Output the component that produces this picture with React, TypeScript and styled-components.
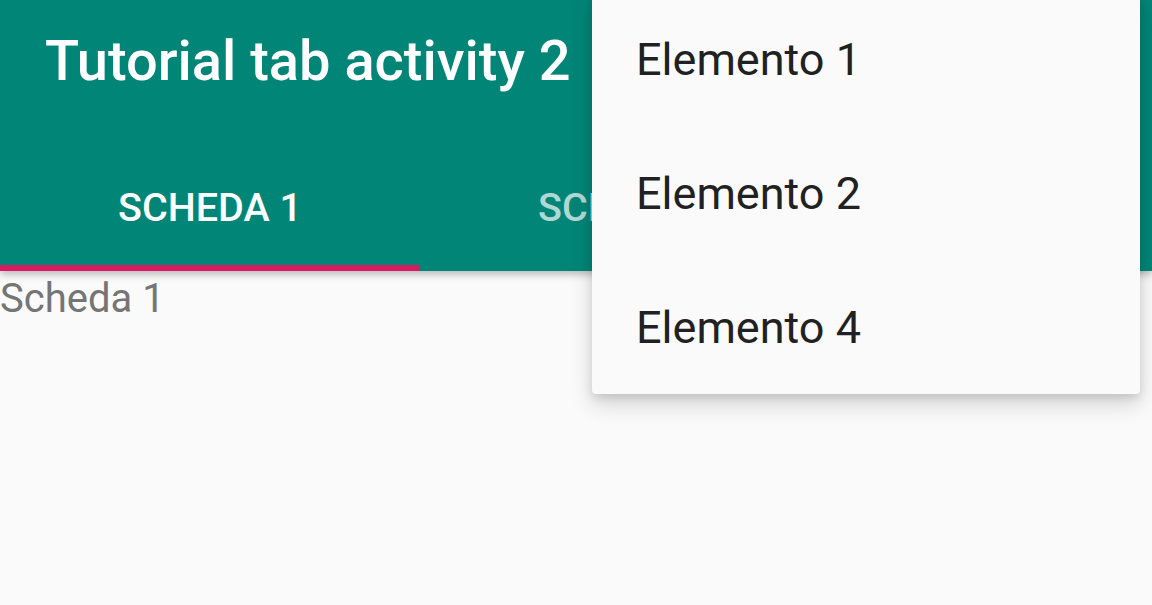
import styled, { createGlobalStyle } from 'styled-components'

const GlobalStyle = createGlobalStyle`
  html, body {
    margin: 0;
    padding: 0;
    background: #fafafa;
    font-family: Roboto, "Liberation Sans", sans-serif;
  }
`

const TEAL = '#008577'
const ACCENT = '#d81b60'

interface ITab {
  label: string
  active?: boolean
}

function Tab({ label, active }: ITab) {
  return (
    <TabItem $active={active}>
      <span>{label}</span>
    </TabItem>
  )
}

const menuItems = ['Elemento 1', 'Elemento 2', 'Elemento 4']

function App() {
  return (
    <>
      <GlobalStyle />
      <Screen>
        <AppBar>
          <Toolbar>
            <Title>Tutorial tab activity 2</Title>
          </Toolbar>
          <Tabs>
            <Tab label="SCHEDA 1" active />
            <Tab label="SCHEDA 2" />
          </Tabs>
        </AppBar>
        <Content>Scheda 1</Content>
        <Menu>
          {menuItems.map((item) => (
            <MenuItem key={item}>{item}</MenuItem>
          ))}
        </Menu>
      </Screen>
    </>
  )
}

const Screen = styled.div`
  position: relative;
  width: 1152px;
  height: 605px;
  overflow: hidden;
  background: #fafafa;
`

const AppBar = styled.header`
  display: flex;
  flex-direction: column;
  height: 271px;
  background: ${TEAL};
  box-shadow: 0 3px 8px rgba(0, 0, 0, 0.28);
  position: relative;
  z-index: 1;
`

const Toolbar = styled.div`
  height: 122px;
  display: flex;
  align-items: center;
  padding-left: 45px;
`

const Title = styled.h1`
  margin: 0;
  font-size: 56px;
  font-weight: 500;
  color: #ffffff;
  line-height: 1;
`

const Tabs = styled.nav`
  flex: 1;
  display: flex;
`

const TabItem = styled.div<{ $active?: boolean }>`
  width: 420px;
  flex-shrink: 0;
  display: flex;
  align-items: center;
  justify-content: center;
  box-sizing: border-box;
  padding-top: 28px;
  border-bottom: 6px solid ${(p) => (p.$active ? ACCENT : 'transparent')};
  font-size: 39.5px;
  font-weight: 500;
  color: ${(p) => (p.$active ? '#ffffff' : 'rgba(255, 255, 255, 0.7)')};
`

const Content = styled.div`
  padding-top: 4px;
  font-size: 40px;
  line-height: 1.2;
  color: #757575;
`

const Menu = styled.ul`
  position: absolute;
  top: -8px;
  left: 592px;
  z-index: 2;
  width: 548px;
  margin: 0;
  padding: 0;
  list-style: none;
  background: #fafafa;
  border-radius: 4px;
  box-shadow: 0 10px 22px rgba(0, 0, 0, 0.16), 0 4px 8px rgba(0, 0, 0, 0.1);
`

const MenuItem = styled.li`
  height: 134px;
  display: flex;
  align-items: center;
  padding-left: 44px;
  font-size: 45px;
  color: #212121;
`

export default App
